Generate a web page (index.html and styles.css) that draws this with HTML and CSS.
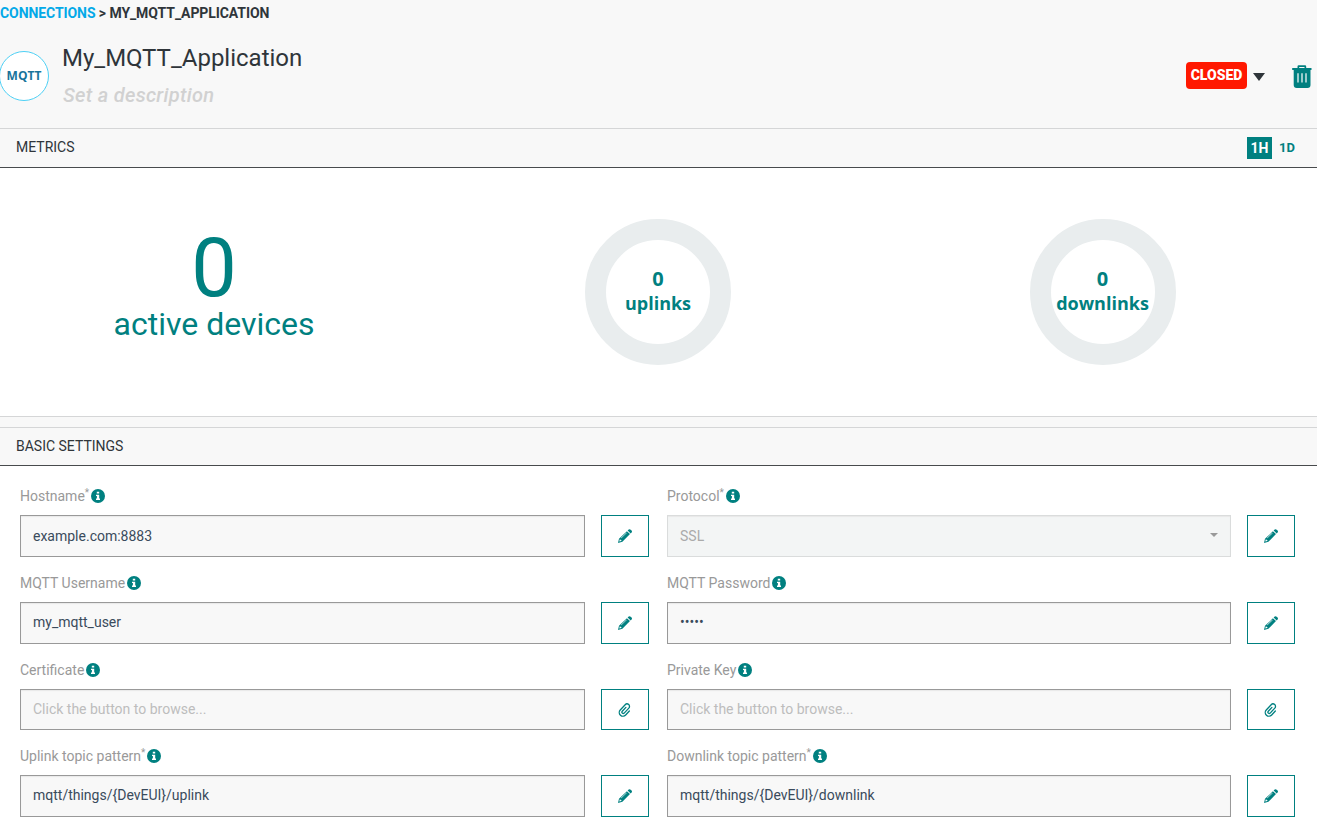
FILE: index.html
```html
<!DOCTYPE html>
<html lang="en">
<head>
<meta charset="utf-8">
<title>My_MQTT_Application</title>
<link rel="stylesheet" href="styles.css">
</head>
<body>
<svg class="sprite" aria-hidden="true">
  <symbol id="info" viewBox="0 0 14 14"><circle cx="7" cy="7" r="7" fill="#008080"/><path d="M5.800 2.700h2.400v1.900H5.800zM5 5.700h3.200v3.900H9V11H5V9.600h.9V7H5z" fill="#fff"/></symbol>
  <symbol id="pencil" viewBox="0 0 14 14"><path fill="#008080" fill-rule="evenodd" d="M0 13.900 1 9.700 8.900 2.300 12 5.100 4.400 12.800ZM1.700 10.600 1.300 12.500 3.300 12 3.500 11.300 2.500 11.100 2.300 10.200ZM3.300 9.300 8.700 4.100 8.300 3.700 2.900 8.900ZM9.600 1.600 10.700.5Q11.700-.2 12.700.7L13.600 1.600Q14.400 2.500 13.600 3.500L12.700 4.400Z"/></symbol>
  <symbol id="clip" viewBox="0 0 14 14"><g transform="rotate(43 7 7)"><path fill="none" stroke="#008080" stroke-width="1.300" stroke-linecap="round" d="M5.900 4.500V9.800A1.300 1.300 0 0 0 8.500 9.800V3A2.500 2.500 0 0 0 3.500 3V10.200A3.700 3.700 0 0 0 10.900 10.200V4.800"/></g></symbol>
</svg>
<header class="header">
  <nav class="crumbs"><a class="crumb-link">CONNECTIONS</a> &gt; MY_MQTT_APPLICATION</nav>
  <div class="identity">
    <div class="logo">MQTT</div>
    <div class="titles">
      <h1 class="title">My_MQTT_Application</h1>
      <p class="description">Set a description</p>
    </div>
    <span class="status">CLOSED</span>
    <svg class="caret" viewBox="0 0 12 8"><path d="M0 0h12L6 8z" fill="#2f353a"/></svg>
    <svg class="trash" viewBox="0 0 20 23"><path fill="#008080" fill-rule="evenodd" d="M5.500 3V1.500Q5.500.3 6.700.3H13Q14.200.3 14.200 1.500V3H19.500V5H18.500V20Q18.500 23 15.500 23H4.700Q1.700 23 1.700 20V5H.2V3ZM7.200 3H12.500V2H7.200Z"/><path d="M6 8.200v9.300M10 8.200v9.300M14 8.200v9.300" stroke="#fff" stroke-width="1.200"/></svg>
  </div>
</header>
<section class="panel metrics">
  <div class="panel-head"><h2 class="panel-title">METRICS</h2><div class="range"><span class="range-item active">1H</span><span class="range-item">1D</span></div></div>
  <div class="metric-row">
    <div class="devices"><div class="devices-count">0</div><div class="devices-label">active devices</div></div>
    <div class="donut"><span class="donut-count">0</span><span>uplinks</span></div>
    <div class="donut"><span class="donut-count">0</span><span>downlinks</span></div>
  </div>
</section>
<section class="panel settings">
  <div class="panel-head"><h2 class="panel-title">BASIC SETTINGS</h2></div>
  <div class="fields">
    <div class="field"><label class="label">Hostname<sup>*</sup><svg class="info"><use href="#info"/></svg></label><div class="control"><div class="input tall">example.com:8883</div><button class="action"><svg class="icon"><use href="#pencil"/></svg></button></div></div>
    <div class="field"><label class="label">Protocol<sup>*</sup><svg class="info"><use href="#info"/></svg></label><div class="control"><div class="input tall disabled">SSL<svg class="select-caret" viewBox="0 0 8 4"><path d="M0 0h8L4 4z" fill="#999"/></svg></div><button class="action"><svg class="icon"><use href="#pencil"/></svg></button></div></div>
    <div class="field"><label class="label">MQTT Username<svg class="info"><use href="#info"/></svg></label><div class="control"><div class="input">my_mqtt_user</div><button class="action"><svg class="icon"><use href="#pencil"/></svg></button></div></div>
    <div class="field"><label class="label">MQTT Password<svg class="info"><use href="#info"/></svg></label><div class="control"><div class="input">•••••</div><button class="action"><svg class="icon"><use href="#pencil"/></svg></button></div></div>
    <div class="field file"><label class="label">Certificate<svg class="info"><use href="#info"/></svg></label><div class="control"><div class="input placeholder">Click the button to browse...</div><button class="action"><svg class="icon"><use href="#clip"/></svg></button></div></div>
    <div class="field file"><label class="label">Private Key<svg class="info"><use href="#info"/></svg></label><div class="control"><div class="input placeholder">Click the button to browse...</div><button class="action"><svg class="icon"><use href="#clip"/></svg></button></div></div>
    <div class="field"><label class="label">Uplink topic pattern<sup>*</sup><svg class="info"><use href="#info"/></svg></label><div class="control"><div class="input">mqtt/things/{DevEUI}/uplink</div><button class="action"><svg class="icon"><use href="#pencil"/></svg></button></div></div>
    <div class="field"><label class="label">Downlink topic pattern<sup>*</sup><svg class="info"><use href="#info"/></svg></label><div class="control"><div class="input">mqtt/things/{DevEUI}/downlink</div><button class="action"><svg class="icon"><use href="#pencil"/></svg></button></div></div>
  </div>
</section>
</body>
</html>
```
FILE: styles.css
```css
* { box-sizing: border-box; }
body { margin: 0; height: 827px; overflow: hidden; background: #f8f8f8; color: #2f353a; font: 14px/20px Roboto, "Liberation Sans", sans-serif; }
h1, h2, p { margin: 0; font-weight: 400; }
svg { display: block; flex: none; }
.sprite { display: none; }
.header { height: 128px; }
.crumbs { height: 40px; padding-top: 3px; font-weight: 700; letter-spacing: -.08px; white-space: nowrap; }
.crumb-link { color: #03a9e8; }
.identity { display: flex; align-items: flex-start; }
.logo { width: 50px; height: 50px; margin: 11px 0 0 -1px; border: 1px solid #4dd0f5; border-radius: 50%; background: #fff; color: #19749b; font: 700 12px/47px "Open Sans", sans-serif; text-align: center; }
.titles { flex: 1; padding-left: 13px; }
.title { font-size: 24px; line-height: 36px; }
.description { margin-top: 7px; padding-left: 1px; color: #d1d1d1; font-size: 20px; line-height: 24px; font-weight: 500; font-style: italic; letter-spacing: .3px; }
.status { width: 61px; height: 27px; margin-top: 22px; border-radius: 4px; background: #ff1800; color: #fff; font-weight: 900; line-height: 27px; text-align: center; }
.caret { width: 12px; height: 8px; margin: 33px 27px 0 6px; }
.trash { width: 20px; height: 23px; margin: 25px 5.500px 0 -.5px; }
.panel { border-top: 1px solid #d5d6d7; background: #fff; }
.panel-head { display: flex; justify-content: space-between; height: 39px; padding: 0 16px; border-bottom: 1px solid #484b4d; background: #f8f8f8; }
.panel-title { font-size: 14px; line-height: 37px; }
.range { display: flex; gap: 1px; padding-top: 8px; color: #008080; font-size: 13px; font-weight: 700; line-height: 22px; text-align: center; }
.range-item { width: 28px; height: 22px; }
.range-item.active { width: 25px; background: #008080; color: #fff; font-size: 14px; }
.metrics { height: 289px; border-bottom: 1px solid #d5d6d7; }
.metric-row { display: grid; grid-template-columns: 428px 460px 429px; height: 248px; justify-items: center; color: #008080; }
.devices { padding-top: 61px; text-align: center; }
.devices-count { font-size: 81px; line-height: 80px; }
.devices-label { font-size: 32px; line-height: 30px; }
.donut { display: flex; flex-direction: column; align-items: center; width: 146px; height: 146px; margin-top: 51px; padding-top: 26px; border: 21px solid #e9edee; border-radius: 50%; font: 700 18px/25px "Open Sans", sans-serif; }
.donut-count { font-size: 20px; }
.settings { height: 400px; margin-top: 10px; }
.settings .panel-head { height: 38px; }
.fields { display: grid; grid-template-columns: 629px 628px; column-gap: 18px; padding: 20px 22px 0 20px; }
.field { height: 87px; }
.field.file { height: 86px; }
.label { display: flex; height: 29px; color: #999; line-height: 20px; white-space: nowrap; }
.label sup { height: 14px; font-size: 10px; line-height: 13px; vertical-align: baseline; }
.info { width: 14px; height: 14px; margin: 2.500px 0 0 2px; }
.control { display: flex; gap: 16px; height: 42px; }
.file .control { height: 41px; }
.input { display: flex; flex: 1; justify-content: space-between; padding: 0 12px; border: 1px solid #999; background: #f8f8f8; box-shadow: inset 0 1px 1px #e8e8e8; color: #3a4b5c; line-height: 39px; }
.input.tall { line-height: 41px; }
.input.placeholder { color: #bdbdbd; }
.input.disabled { border-color: #dadcdc; background: #f3f5f5; color: #aaa; }
.select-caret { width: 8px; height: 4px; margin-top: 17px; }
.action { display: flex; align-items: center; justify-content: center; width: 48px; padding: 0; border: 1px solid #008080; background: #fff; }
.icon { width: 14px; height: 14px; }
```
